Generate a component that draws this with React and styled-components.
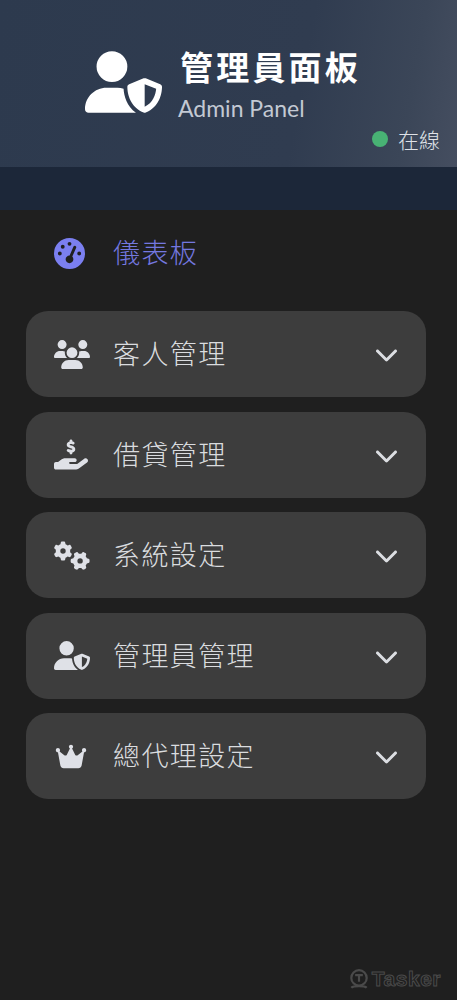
import React from 'react';
import styled, { createGlobalStyle } from 'styled-components';
import {
  FaUserShield,
  FaGaugeHigh,
  FaUsers,
  FaHandHoldingDollar,
  FaGears,
  FaCrown,
  FaChevronDown,
} from 'react-icons/fa6';

const GlobalStyle = createGlobalStyle`
  html, body {
    margin: 0;
    padding: 0;
    background: #1e1e1e;
  }
`;

const Sidebar = styled.div`
  position: relative;
  width: 457px;
  height: 1000px;
  overflow: hidden;
  background: #1f1f1f;
  font-family: 'Noto Sans CJK TC', 'Lato', sans-serif;
`;

const HeaderWrap = styled.div`
  background: #1c2739;
  height: 210px;
`;

const Header = styled.div`
  position: relative;
  height: 167px;
  box-sizing: border-box;
  padding: 44px 0 0 85px;
  display: flex;
  align-items: flex-start;
  gap: 16px;
  background: linear-gradient(100deg, #2d3a4e 0%, #303c50 65%, #3b4658 88%, #454e60 100%);
`;

const HeaderIcon = styled(FaUserShield)`
  width: 77px;
  height: 62px;
  margin-top: 7px;
  color: #ffffff;
`;

const TitleBlock = styled.div`
  display: flex;
  flex-direction: column;
`;

const Title = styled.div`
  font-size: 33px;
  line-height: 44px;
  font-weight: 700;
  letter-spacing: 3.2px;
  color: #ffffff;
  margin-left: 2px;
`;

const Subtitle = styled.div`
  margin-top: 6px;
  font-family: 'Lato', sans-serif;
  font-size: 23px;
  line-height: 28px;
  color: #c3c9d3;
`;

const Status = styled.div`
  position: absolute;
  right: 17px;
  top: 125px;
  display: flex;
  align-items: center;
  gap: 10px;
  font-size: 21px;
  line-height: 28px;
  font-weight: 300;
  color: #dfe2e7;
`;

const Dot = styled.span`
  width: 16px;
  height: 16px;
  border-radius: 50%;
  background: #48b274;
`;

const Nav = styled.div`
  padding: 18px 31px 0 26px;
  display: flex;
  flex-direction: column;
  gap: 14.5px;
`;

const Row = styled.div`
  height: ${(p) => (p.$plain ? '50px' : '86px')};
  margin-bottom: ${(p) => (p.$plain ? '18.5px' : '0')};
  display: flex;
  align-items: center;
  padding: 0 26px 0 28px;
  border-radius: 22px;
  background: ${(p) => (p.$plain ? 'transparent' : '#3d3d3d')};
  color: ${(p) => (p.$plain ? '#7478e0' : '#dadcdf')};
`;

const IconSlot = styled.div`
  width: 59px;
  flex: none;
  display: flex;
  align-items: center;
  color: ${(p) => (p.$plain ? '#7b7ff0' : '#dfe1e7')};

  svg {
    display: block;
    width: ${(p) => p.$w}px;
    height: ${(p) => p.$h}px;
  }
`;

const Label = styled.span`
  flex: 1;
  font-size: 27px;
  line-height: 36px;
  letter-spacing: 1.4px;
  font-weight: 300;
  margin-top: -2px;
`;

const Chevron = styled(FaChevronDown)`
  width: 27px;
  height: 24px;
  color: #dcdee2;
`;

const Watermark = styled.div`
  position: absolute;
  right: 16px;
  bottom: 10px;
  display: flex;
  align-items: center;
  gap: 2px;
  color: #1f1f1f;
  font-family: 'Liberation Sans', sans-serif;
  font-size: 21px;
  font-weight: 700;
  line-height: 22px;
  letter-spacing: 0.5px;
  -webkit-text-stroke: 1px #4a4a4a;
`;

const WatermarkLogo = styled.svg`
  width: 22px;
  height: 22px;
`;

const items = [
  { label: '客人管理', Icon: FaUsers, w: 36, h: 29 },
  { label: '借貸管理', Icon: FaHandHoldingDollar, w: 34, h: 31 },
  { label: '系統設定', Icon: FaGears, w: 36, h: 29 },
  { label: '管理員管理', Icon: FaUserShield, w: 36, h: 29 },
  { label: '總代理設定', Icon: FaCrown, w: 34, h: 27 },
];

const App = () => (
  <>
    <GlobalStyle />
    <Sidebar>
      <HeaderWrap>
        <Header>
          <HeaderIcon />
          <TitleBlock>
            <Title>管理員面板</Title>
            <Subtitle>Admin Panel</Subtitle>
          </TitleBlock>
          <Status>
            <Dot />
            在線
          </Status>
        </Header>
      </HeaderWrap>
      <Nav>
        <Row $plain>
          <IconSlot $plain $w={31} $h={31}>
            <FaGaugeHigh />
          </IconSlot>
          <Label>儀表板</Label>
        </Row>
        {items.map(({ label, Icon, w, h }) => (
          <Row key={label}>
            <IconSlot $w={w} $h={h}>
              <Icon />
            </IconSlot>
            <Label>{label}</Label>
            <Chevron />
          </Row>
        ))}
      </Nav>
      <Watermark>
        <WatermarkLogo viewBox="0 0 20 20" fill="none" stroke="#4a4a4a">
          <circle cx="10" cy="9" r="7" strokeWidth="2" />
          <path d="M6.5 6.5h7M10 6.5v6" strokeWidth="2" />
          <path d="M3 18c2-2 12-2 14 0" strokeWidth="2" />
        </WatermarkLogo>
        Tasker
      </Watermark>
    </Sidebar>
  </>
);

export default App;
